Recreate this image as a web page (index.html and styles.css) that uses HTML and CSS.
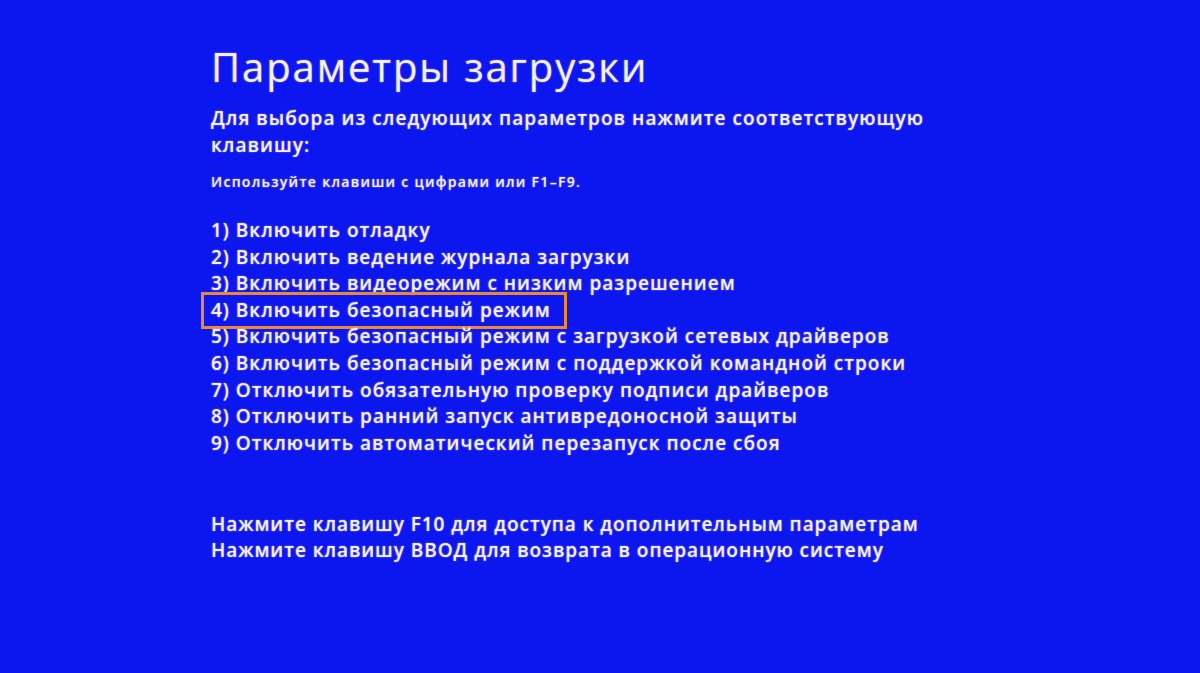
FILE: index.html
```html
<!DOCTYPE html>
<html lang="ru">
<head>
<meta charset="utf-8">
<link rel="stylesheet" href="styles.css">
</head>
<body>
<main class="screen">
  <h1 class="title">Параметры загрузки</h1>
  <p class="lead">Для выбора из следующих параметров нажмите соответствующую клавишу:</p>
  <p class="hint">Используйте клавиши с цифрами или F1–F9.</p>
  <ol class="options">
    <li>1) Включить отладку</li>
    <li>2) Включить ведение журнала загрузки</li>
    <li>3) Включить видеорежим с низким разрешением</li>
    <li class="selected">4) Включить безопасный режим</li>
    <li>5) Включить безопасный режим с загрузкой сетевых драйверов</li>
    <li>6) Включить безопасный режим с поддержкой командной строки</li>
    <li>7) Отключить обязательную проверку подписи драйверов</li>
    <li>8) Отключить ранний запуск антивредоносной защиты</li>
    <li>9) Отключить автоматический перезапуск после сбоя</li>
  </ol>
  <div class="footer">
    <p>Нажмите клавишу F10 для доступа к дополнительным параметрам</p>
    <p>Нажмите клавишу ВВОД для возврата в операционную систему</p>
  </div>
</main>
</body>
</html>
```

FILE: styles.css
```css
html, body {
  margin: 0;
  padding: 0;
  background: #0c16ee;
}
.screen {
  width: 1200px;
  height: 673px;
  box-sizing: border-box;
  padding: 42px 0 0 211px;
  background: #0c16ee;
  color: #f6f0fc;
  font-family: "Open Sans", "Noto Sans", sans-serif;
  text-shadow: 0 0 2px rgba(255, 225, 255, 0.55);
  overflow: hidden;
}
.title {
  margin: 0;
  font-size: 40px;
  font-weight: 400;
  line-height: 50px;
  letter-spacing: 1.9px;
}
.lead {
  margin: 13px 0 0 0;
  width: 740px;
  font-size: 19px;
  font-weight: 600;
  line-height: 27px;
  letter-spacing: 1.05px;
}
.hint {
  margin: 13px 0 0 0;
  font-size: 14px;
  font-weight: 600;
  line-height: 20px;
  letter-spacing: 1.3px;
}
.options {
  list-style: none;
  margin: 25px 0 0 0;
  padding: 0;
  font-size: 19px;
  font-weight: 600;
  line-height: 26.6px;
  letter-spacing: 1px;
}
.options li {
  position: relative;
}
.options .selected::before {
  content: "";
  position: absolute;
  left: -10px;
  top: -5px;
  width: 360px;
  height: 31px;
  border: 3px solid #ec882f;
}
.footer {
  margin-top: 55px;
  font-size: 19px;
  font-weight: 600;
  line-height: 26px;
  letter-spacing: 0.95px;
}
.footer p {
  margin: 0;
}
```
